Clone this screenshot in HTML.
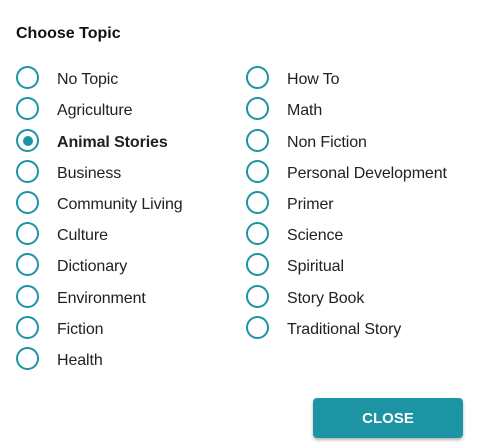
<html><head><style>
body{margin:0;width:487px;height:448px;background:#fff;font-family:"Liberation Sans",sans-serif;color:#212121;position:relative;overflow:hidden}
h1{position:absolute;left:16px;top:25px;margin:0;font-size:16px;font-weight:bold;color:#111}
.r{position:absolute;height:24px;font-size:16px;line-height:24px;white-space:nowrap;margin-top:1px}
.r i{position:absolute;left:-12px;top:0;width:19px;height:19px;border:2.5px solid #1d94a3;border-radius:50%;box-sizing:content-box;margin-top:-1px}
.r.s i::after{content:"";position:absolute;left:4.5px;top:4.5px;width:10px;height:10px;border-radius:50%;background:#1d94a3}
.r span{position:absolute;left:29px;top:1px;letter-spacing:-0.1px}
.r.s span{font-weight:bold}
.btn{position:absolute;left:313px;top:398px;width:150px;height:40px;background:#1d94a3;border-radius:4px;color:#fff;font-weight:bold;font-size:15px;text-align:center;line-height:42px;box-shadow:0 2px 3px rgba(0,0,0,.3)}
</style></head><body>
<h1>Choose Topic</h1>
<div class="r" style="left:28px;top:66px"><i></i><span>No Topic</span></div>
<div class="r" style="left:28px;top:97px"><i></i><span>Agriculture</span></div>
<div class="r s" style="left:28px;top:129px"><i></i><span>Animal Stories</span></div>
<div class="r" style="left:28px;top:160px"><i></i><span>Business</span></div>
<div class="r" style="left:28px;top:191px"><i></i><span>Community Living</span></div>
<div class="r" style="left:28px;top:222px"><i></i><span>Culture</span></div>
<div class="r" style="left:28px;top:253px"><i></i><span>Dictionary</span></div>
<div class="r" style="left:28px;top:285px"><i></i><span>Environment</span></div>
<div class="r" style="left:28px;top:316px"><i></i><span>Fiction</span></div>
<div class="r" style="left:28px;top:347px"><i></i><span>Health</span></div>
<div class="r" style="left:258px;top:66px"><i></i><span>How To</span></div>
<div class="r" style="left:258px;top:97px"><i></i><span>Math</span></div>
<div class="r" style="left:258px;top:129px"><i></i><span>Non Fiction</span></div>
<div class="r" style="left:258px;top:160px"><i></i><span>Personal Development</span></div>
<div class="r" style="left:258px;top:191px"><i></i><span>Primer</span></div>
<div class="r" style="left:258px;top:222px"><i></i><span>Science</span></div>
<div class="r" style="left:258px;top:253px"><i></i><span>Spiritual</span></div>
<div class="r" style="left:258px;top:285px"><i></i><span>Story Book</span></div>
<div class="r" style="left:258px;top:316px"><i></i><span>Traditional Story</span></div>
<div class="btn">CLOSE</div>
</body></html>
